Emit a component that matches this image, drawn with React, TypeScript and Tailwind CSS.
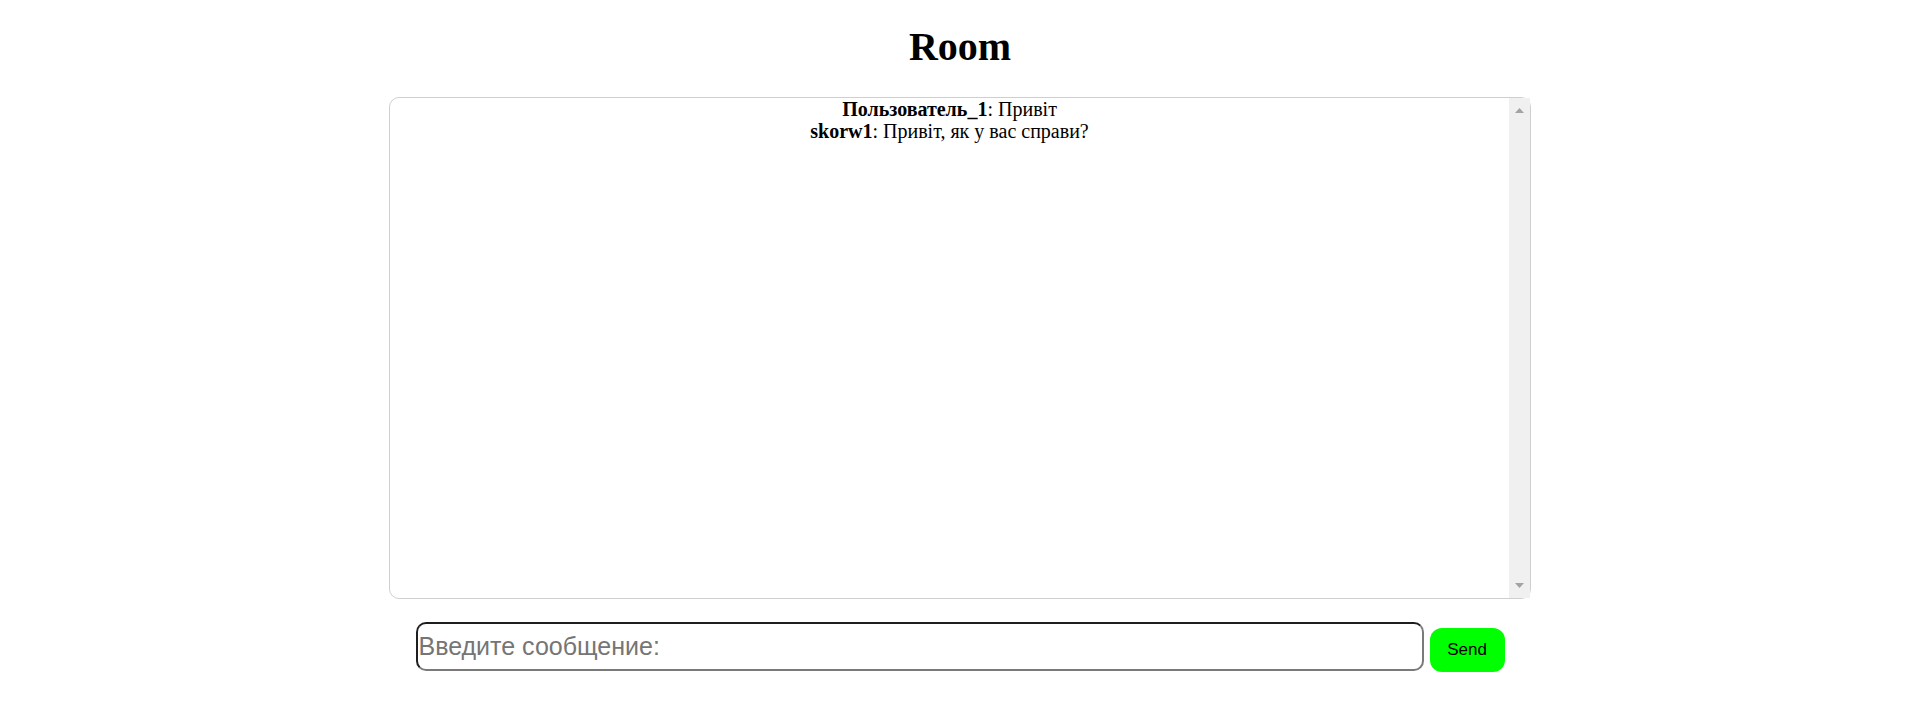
import { useState } from "react";

type Message = { user: string; text: string };

const messages: Message[] = [
  { user: "Пользователь_1", text: "Привіт" },
  { user: "skorw1", text: "Привіт, як у вас справи?" },
];

// drawn scrollbar: the page screenshot hides native ones
function ScrollTrack() {
  return (
    <div className="flex w-[21px] shrink-0 flex-col items-center justify-between bg-[#f0f0f0] py-[10px]">
      <svg width="9" height="5" viewBox="0 0 9 5">
        <path d="M4.5 0L9 5H0z" fill="#a3a3a3" />
      </svg>
      <svg width="9" height="5" viewBox="0 0 9 5">
        <path d="M0 0h9L4.5 5z" fill="#a3a3a3" />
      </svg>
    </div>
  );
}

export default function App() {
  const [draft, setDraft] = useState("");

  return (
    <div className="min-h-screen bg-white font-['Liberation_Serif','DejaVu_Serif',serif] text-[20px] text-black">
      <h1 className="pt-[24px] pb-[27px] text-center text-[40px] font-bold leading-[46px]">
        Room
      </h1>

      {/* chat log */}
      <div className="mx-auto flex h-[502px] w-[1142px] rounded-[10px] border border-[#cfcfcf]">
        <div className="flex-1 overflow-y-auto text-center leading-[22px]">
          {messages.map((m, i) => (
            <div key={i}>
              <b>{m.user}</b>: {m.text}
            </div>
          ))}
        </div>
        <ScrollTrack />
      </div>

      {/* message form */}
      <form
        className="mt-[23px] flex items-start justify-center gap-[6px]"
        onSubmit={(e) => {
          e.preventDefault();
          setDraft("");
        }}
      >
        <input
          value={draft}
          onChange={(e) => setDraft(e.target.value)}
          placeholder="Введите сообщение:"
          className="h-[49px] w-[1008px] rounded-[10px] border-2 border-t-[#1e1e1e] border-l-[#1e1e1e] border-r-[#7a7a7a] border-b-[#7a7a7a] px-[1px] font-['Liberation_Sans',Arial,sans-serif] text-[25px] outline-none placeholder:text-[#757575]"
        />
        <button
          type="submit"
          className="mt-[6px] h-[44px] w-[75px] rounded-[12px] bg-[#00ff00] font-['Liberation_Sans',Arial,sans-serif] text-[17px] text-black"
        >
          Send
        </button>
      </form>
    </div>
  );
}
